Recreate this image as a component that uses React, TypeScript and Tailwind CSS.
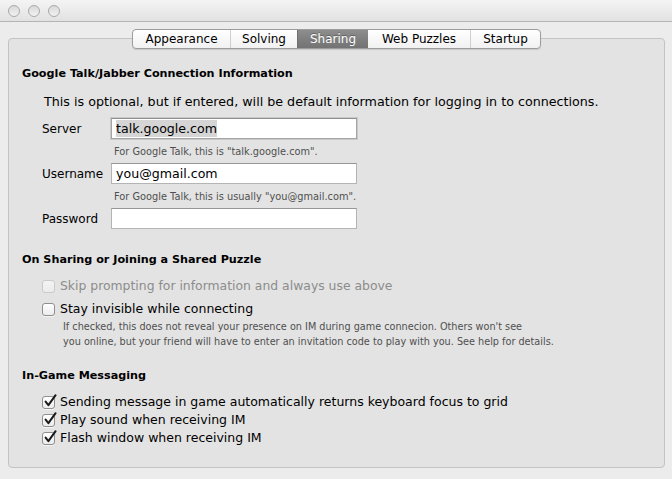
import React from 'react';

const tabs = [
  { label: 'Appearance', width: 'w-[97px]' },
  { label: 'Solving', width: 'w-[67px]' },
  { label: 'Sharing', width: 'w-[71px]' },
  { label: 'Web Puzzles', width: 'w-[102px]' },
  { label: 'Startup', width: 'w-[70px]' },
];

const TrafficLight: React.FC = () => (
  <div className="w-[12px] h-[12px] rounded-full border border-[#a9a9a9] bg-gradient-to-b from-[#d9d9d9] to-[#f2f2f2]" />
);

const Checkbox: React.FC<{ checked?: boolean; disabled?: boolean }> = ({ checked, disabled }) => (
  <div className="relative w-[13px] h-[13px] shrink-0">
    <div
      className={
        disabled
          ? 'w-[13px] h-[13px] rounded-[3px] border border-[#cbcbcb] bg-gradient-to-b from-[#f4f4f4] to-[#ebebeb]'
          : 'w-[13px] h-[13px] rounded-[3px] border border-[#8f8f8f] bg-gradient-to-b from-[#ffffff] to-[#ececec] shadow-[0_1px_0_rgba(255,255,255,0.6)]'
      }
    />
    {checked && (
      <svg className="absolute left-[1px] top-[-3px]" width="15" height="15" viewBox="0 0 15 15">
        <path d="M2.6 8.6 L5.4 12.2 L12.6 2.2" fill="none" stroke="#1a1a1a" strokeWidth="2" strokeLinecap="round" strokeLinejoin="round" />
      </svg>
    )}
  </div>
);

const CheckRow: React.FC<{ label: string; checked?: boolean; disabled?: boolean }> = ({ label, checked, disabled }) => (
  <div className="flex items-center h-[18px] gap-[5px] pl-[20px]">
    <Checkbox checked={checked} disabled={disabled} />
    <span className={disabled ? 'text-[12.4px] text-[#8c8c8c]' : 'text-[12.5px] text-black'}>{label}</span>
  </div>
);

const FieldRow: React.FC<{ label: string; value?: string; focused?: boolean; hint?: string }> = ({ label, value, focused, hint }) => (
  <div>
    <div className="flex items-center pl-[20px]">
      <span className="w-[69px] text-[12px]">{label}</span>
      <div
        className={
          focused
            ? 'w-[246px] h-[21px] bg-white border border-[#a4a4a4] border-t-[#8e8e8e] ring-1 ring-[#c9c9c9] flex items-center pl-[4px]'
            : 'w-[246px] h-[21px] bg-white border border-[#b4b4b4] border-t-[#979797] flex items-center pl-[4px]'
        }
      >
        {value && (
          <span className={focused ? 'text-[12.6px] leading-[17px] bg-[#d5d5d5] text-black' : 'text-[12.6px] leading-[17px] text-black'}>
            {value}
          </span>
        )}
      </div>
    </div>
    {hint && <div className="mt-[6px] pl-[92px] text-[9.8px] leading-[13px] text-[#4f4f4f]">{hint}</div>}
  </div>
);

const App: React.FC = () => {
  return (
    <div className="w-[672px] h-[479px] overflow-hidden bg-[#ececec] text-black font-['DejaVu_Sans',sans-serif]">
      {/* title bar */}
      <div className="h-[22px] flex items-center gap-[8px] pl-[8px] bg-gradient-to-b from-[#f4f4f4] to-[#e2e2e2] border-b border-[#b5b5b5]">
        <TrafficLight />
        <TrafficLight />
        <TrafficLight />
      </div>

      <div className="pl-[8px] pr-[7px] pt-[7px]">
        {/* segmented tabs */}
        <div className="relative z-10 flex justify-center">
          <div className="flex h-[20px] rounded-[4px] border border-[#9c9c9c] bg-gradient-to-b from-[#ffffff] to-[#f1f1f1] shadow-[0_1px_1px_rgba(0,0,0,0.12)] overflow-hidden">
            {tabs.map((t, i) =>
              t.label === 'Sharing' ? (
                <div
                  key={t.label}
                  className={`${t.width} flex items-center justify-center text-[12px] text-white bg-gradient-to-b from-[#8d8d8d] to-[#737373] border-l border-[#6f6f6f] [text-shadow:0_-1px_0_rgba(0,0,0,0.3)]`}
                >
                  {t.label}
                </div>
              ) : (
                <div
                  key={t.label}
                  className={`${t.width} flex items-center justify-center text-[12px] ${i > 0 && tabs[i - 1].label !== 'Sharing' ? 'border-l border-[#cfcfcf]' : ''}`}
                >
                  {t.label}
                </div>
              )
            )}
          </div>
        </div>

        {/* tab content box */}
        <div className="-mt-[11px] h-[430px] rounded-[4px] border border-[#c3c3c3] bg-[#e3e3e3] pt-[28px] pl-[13px]">
          <div className="text-[11.2px] font-bold leading-[14px]">Google Talk/Jabber Connection Information</div>
          <div className="mt-[13px] pl-[22px] text-[12.7px] leading-[15px]">
            This is optional, but if entered, will be default information for logging in to connections.
          </div>

          <div className="mt-[9px]">
            <FieldRow label="Server" value="talk.google.com" focused hint={'For Google Talk, this is "talk.google.com".'} />
            <div className="mt-[5px]">
              <FieldRow label="Username" value="you@gmail.com" hint={'For Google Talk, this is usually "you@gmail.com".'} />
            </div>
            <div className="mt-[5px]">
              <FieldRow label="Password" />
            </div>
          </div>

          <div className="mt-[24px] text-[11.2px] font-bold leading-[14px]">On Sharing or Joining a Shared Puzzle</div>
          <div className="mt-[10px]">
            <CheckRow label="Skip prompting for information and always use above" disabled />
          </div>
          <div className="mt-[5px]">
            <CheckRow label="Stay invisible while connecting" />
          </div>
          <div className="mt-[1px] pl-[41px] text-[9.7px] leading-[15px] text-[#4f4f4f]">
            <div>If checked, this does not reveal your presence on IM during game connecion. Others won't see</div>
            <div>you online, but your friend will have to enter an invitation code to play with you. See help for details.</div>
          </div>

          <div className="mt-[20px] text-[11.2px] font-bold leading-[14px]">In-Game Messaging</div>
          <div className="mt-[10px]">
            <CheckRow label="Sending message in game automatically returns keyboard focus to grid" checked />
            <CheckRow label="Play sound when receiving IM" checked />
            <CheckRow label="Flash window when receiving IM" checked />
          </div>
        </div>
      </div>
    </div>
  );
};

export default App;
